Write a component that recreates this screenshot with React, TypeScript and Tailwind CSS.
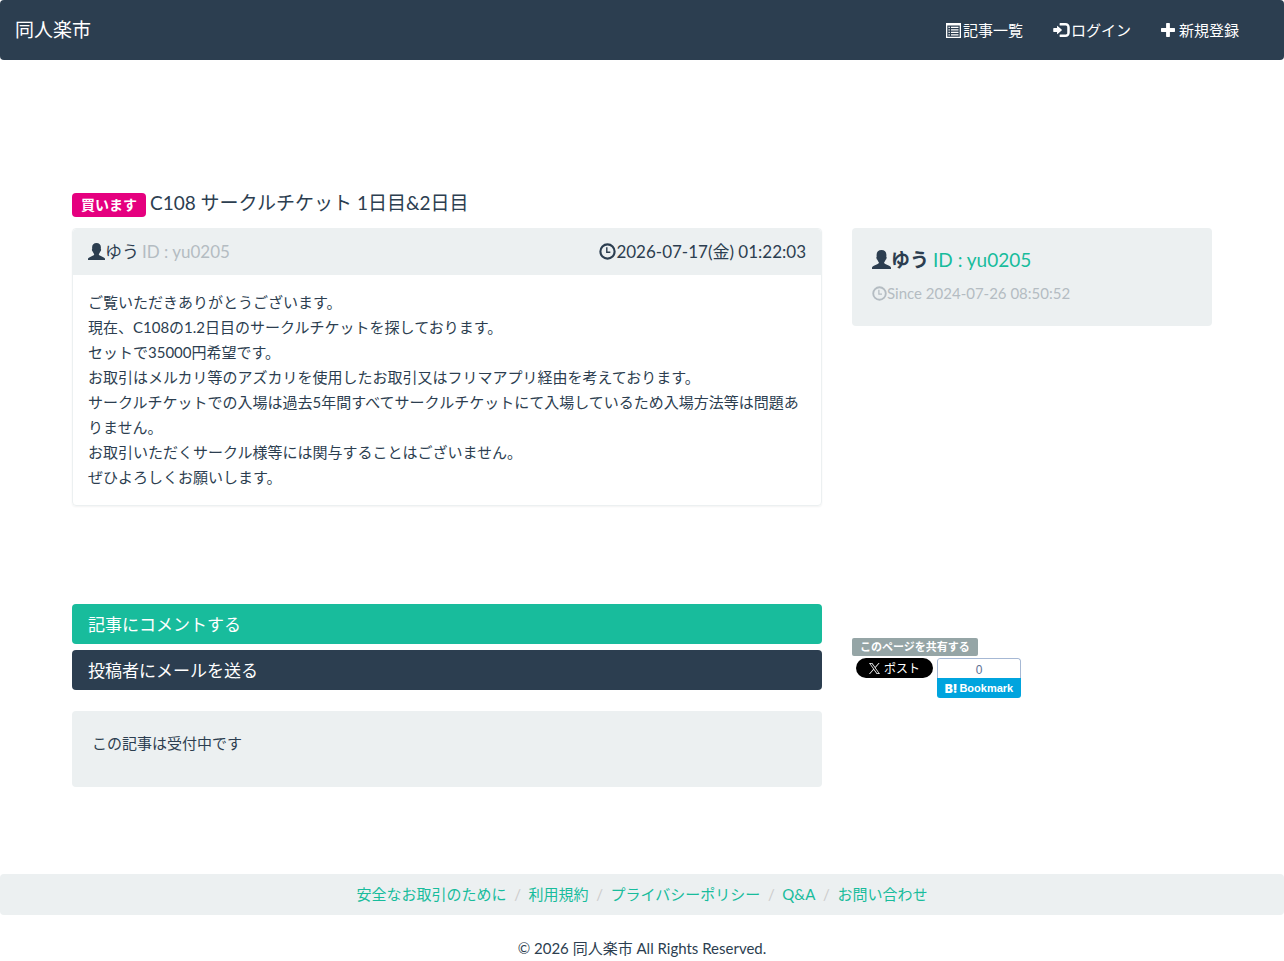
import React from "react";

type IconProps = { className?: string };

function UserIcon({ className = "" }: IconProps) {
  return (
    <svg viewBox="0 0 19 19" fill="currentColor" aria-hidden="true" className={`shrink-0 ${className}`}>
      <path d="M9.500 0C6.500 0 4.600 1.900 4.600 4.800c0 .8 0 1.400.1 2-.5.3-.4 1.200-.1 2 .2.6.5.9.8 1 .3.900.7 1.600 1.200 2.200.3.400.3.700.2 1-.1.500-.5.800-1.100 1.100L1.900 15.800C.6 16.400 0 17 0 18v1h19v-1c0-1-.6-1.600-1.900-2.200l-3.800-1.700c-.6-.3-1-.6-1.100-1.100-.1-.3-.1-.6.2-1 .5-.6.9-1.300 1.200-2.200.3-.1.6-.4.8-1 .3-.8.4-1.700-.1-2 .1-.6.1-1.200.1-2C14.400 1.900 12.500 0 9.500 0z" />
    </svg>
  );
}

function TimeIcon({ className = "" }: IconProps) {
  return (
    <svg viewBox="0 0 1200 1200" fill="currentColor" aria-hidden="true" className={`shrink-0 ${className}`}>
      <path
        fillRule="evenodd"
        d="M600 23a577 577 0 1 0 0 1154a577 577 0 1 0 0-1154zM600 173a427 427 0 1 1 0 854a427 427 0 1 1 0-854zM500 300h100v300h200v100h-300z"
      />
    </svg>
  );
}

function ListIcon({ className = "" }: IconProps) {
  return (
    <svg viewBox="0 0 15 15" fill="currentColor" aria-hidden="true" className={`shrink-0 ${className}`}>
      <path fillRule="evenodd" d="M0 0h15v15H0zM1.300 2.500v11.200h12.400V2.500z" />
      <path d="M2.500 3.800h1.300v1.200H2.500zM5 3.800h7.500v1.200H5zM2.500 6.300h1.300v1.200H2.500zM5 6.300h7.500v1.200H5zM2.500 8.800h1.300v1.200H2.500zM5 8.800h7.500v1.200H5zM2.500 11.300h1.300v1.200H2.500zM5 11.300h7.500v1.200H5z" />
    </svg>
  );
}

function LoginIcon({ className = "" }: IconProps) {
  return (
    <svg viewBox="0 0 1300 1100" fill="currentColor" aria-hidden="true" className={`shrink-0 ${className}`}>
      <g transform="matrix(1 0 0 -1 0 1100)">
        <path d="M550 1100h400q165 0 257.5 -92.5t92.5 -257.5v-400q0 -165 -92.5 -257.5t-257.5 -92.5h-400q-21 0 -35.5 14.5t-14.5 35.5v100q0 21 14.5 35.5t35.5 14.5h450q41 0 70.5 29.5t29.5 70.5v500q0 41 -29.5 70.5t-70.5 29.5h-450q-21 0 -35.5 14.5t-14.5 35.5v100q0 21 14.5 35.5t35.5 14.5zM338 867l324 -284q16 -14 16 -33t-16 -33l-324 -284q-16 -14 -27 -9t-11 26v150h-250q-21 0 -35.5 14.5t-14.5 35.5v200q0 21 14.5 35.5t35.5 14.5h250v150q0 21 11 26t27 -9z" />
      </g>
    </svg>
  );
}

function PlusIcon({ className = "" }: IconProps) {
  return (
    <svg viewBox="0 0 1100 1100" fill="currentColor" aria-hidden="true" className={`shrink-0 ${className}`}>
      <path d="M450 0h200q50 0 50 50v350h350q50 0 50 50v200q0 50-50 50h-350v350q0 50-50 50h-200q-50 0-50-50v-350h-350q-50 0-50-50v-200q0-50 50-50h350v-350q0-50 50-50z" />
    </svg>
  );
}

function XLogo({ className = "" }: IconProps) {
  return (
    <svg viewBox="0 0 24 24" fill="currentColor" aria-hidden="true" className={`shrink-0 ${className}`}>
      <path d="M14.258 10.152L23.176 0h-2.113l-7.747 8.813L7.133 0H0l9.352 13.328L0 23.973h2.113l8.176-9.309 6.531 9.309h7.133zm-2.895 3.293l-.949-1.328L2.875 1.560h3.246l6.086 8.523.945 1.328 7.910 11.078h-3.246z" />
    </svg>
  );
}

const bodyLines = [
  "ご覧いただきありがとうございます。",
  "現在、C108の1.2日目のサークルチケットを探しております。",
  "セットで35000円希望です。",
  "お取引はメルカリ等のアズカリを使用したお取引又はフリマアプリ経由を考えております。",
  "サークルチケットでの入場は過去5年間すべてサークルチケットにて入場しているため入場方法等は問題ありません。",
  "お取引いただくサークル様等には関与することはございません。",
  "ぜひよろしくお願いします。",
];

const footerLinks = ["安全なお取引のために", "利用規約", "プライバシーポリシー", "Q&A", "お問い合わせ"];

export default function App() {
  return (
    <div className="bg-white font-['Lato','Noto_Sans_CJK_JP',sans-serif] text-[15px] leading-[21px] text-[#2c3e50]">
      <nav className="flex h-[60px] items-center justify-between rounded bg-[#2c3e50] pr-[45px] pl-[15px] text-white">
        <a href="#" className="pb-[2px] text-[19px]">
          同人楽市
        </a>
        <ul className="flex gap-[30px]">
          <li>
            <a href="#" className="flex items-center gap-[2px]">
              <ListIcon className="size-[15px]" />
              記事一覧
            </a>
          </li>
          <li>
            <a href="#" className="flex items-center gap-px">
              <LoginIcon className="h-[14px] w-[17px]" />
              ログイン
            </a>
          </li>
          <li>
            <a href="#" className="flex items-center gap-1">
              <PlusIcon className="size-[14px]" />
              新規登録
            </a>
          </li>
        </ul>
      </nav>

      <div className="mx-auto mt-[130px] flex max-w-[1170px]">
        <main className="w-2/3 px-[15px]">
          <h1 className="flex h-[27px] items-end gap-1 text-[19px]">
            <span className="flex h-6 items-center rounded bg-[#e5007f] px-[9px] pb-[2px] text-[14px] font-bold text-white">
              買います
            </span>
            <span className="pb-1">C108 サークルチケット 1日目&amp;2日目</span>
          </h1>

          <article className="mt-[11px] rounded border border-[#ecf0f1] shadow-xs">
            <header className="flex h-[46px] items-center justify-between rounded-t bg-[#ecf0f1] px-[15px] pb-[2px] text-[17px]">
              <p className="flex items-center">
                <UserIcon className="size-[17px]" />
                <span className="mr-[3px]">ゆう</span>
                <span className="text-[#b4bcc2]">ID : yu0205</span>
              </p>
              <p className="flex items-center">
                <TimeIcon className="size-[17px]" />
                <time>2026-07-17(金) 01:22:03</time>
              </p>
            </header>
            <div className="p-[15px] leading-[25px]">
              {bodyLines.map((line) => (
                <p key={line}>{line}</p>
              ))}
            </div>
          </article>

          <div className="mt-[98px] flex flex-col gap-[6px] text-[17px]">
            <button type="button" className="h-10 rounded bg-[#18bc9c] px-4 text-left text-white">
              記事にコメントする
            </button>
            <button type="button" className="h-10 rounded bg-[#2c3e50] px-4 text-left text-white">
              投稿者にメールを送る
            </button>
          </div>

          <p className="mt-[21px] h-[76px] rounded bg-[#ecf0f1] px-5 py-[22px]">この記事は受付中です</p>
        </main>

        <aside className="w-1/3 px-[15px] pt-[38px]">
          <section className="h-[98px] rounded bg-[#ecf0f1] px-5 pt-[21px]">
            <h2 className="flex items-center text-[19px]">
              <UserIcon className="size-[19px]" />
              <span className="mr-1 font-bold">ゆう</span>
              <a href="#" className="text-[#18bc9c]">
                ID : yu0205
              </a>
            </h2>
            <p className="mt-[13px] flex items-center text-[#b4bcc2]">
              <TimeIcon className="size-[15px]" />
              Since 2024-07-26 08:50:52
            </p>
          </section>

          <section className="mt-[312px]">
            <h3 className="flex h-[18px] w-fit items-center rounded-xs bg-[#95a5a6] px-2 pb-px text-[11px] font-bold text-white">
              このページを共有する
            </h3>
            <div className="mt-[2px] flex items-start gap-1 pl-1">
              <a
                href="#"
                className="flex h-5 w-[77px] items-center justify-center gap-1 rounded-full bg-black text-[12px] text-white"
              >
                <XLogo className="size-[11px]" />
                ポスト
              </a>
              <a
                href="#"
                className="flex w-[84px] flex-col overflow-hidden rounded-[3px] font-['Liberation_Sans',sans-serif]"
              >
                <span className="flex h-5 items-center justify-center rounded-t-[3px] border border-b-0 border-[#a6b8d4] pt-1 text-[12px] text-[#5c6f94]">
                  0
                </span>
                <span className="flex h-5 items-center justify-center gap-[2px] bg-[#00a4de] font-bold text-white">
                  <span className="font-['Inter',sans-serif] text-[12px] font-black">B!</span>
                  <span className="text-[11px]">Bookmark</span>
                </span>
              </a>
            </div>
          </section>
        </aside>
      </div>

      <footer className="mt-[87px]">
        <ul className="flex h-[41px] items-center justify-center rounded bg-[#ecf0f1] text-[#18bc9c]">
          {footerLinks.map((label, index) => (
            <li key={label} className="flex">
              {index > 0 && <span className="w-[22px] text-center text-[#cccccc]">/</span>}
              <a href="#">{label}</a>
            </li>
          ))}
        </ul>
        <p className="mt-[23px] text-center">© 2026 同人楽市 All Rights Reserved.</p>
      </footer>
    </div>
  );
}
